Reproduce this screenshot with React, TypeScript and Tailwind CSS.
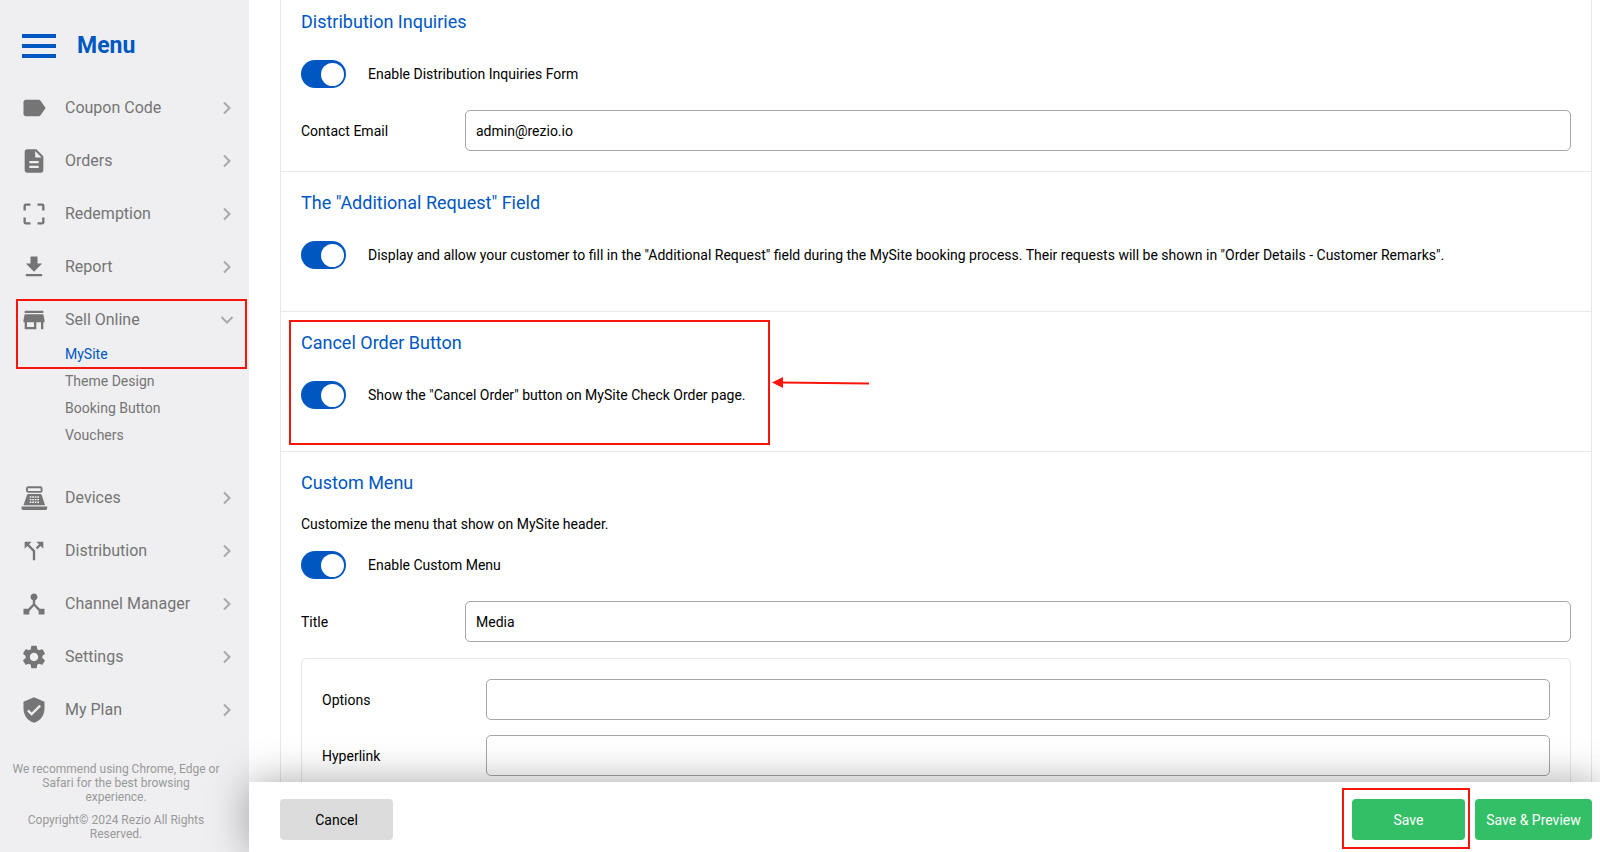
import React, { useState } from 'react';
import type { IconType } from 'react-icons';
import {
  MdCallSplit,
  MdDescription,
  MdDeviceHub,
  MdFileDownload,
  MdLabel,
  MdSettings,
  MdStore,
  MdVerifiedUser,
} from 'react-icons/md';

interface NavItem {
  label: string;
  icon: IconType | typeof ScanIcon;
  children?: string[];
}

function ScanIcon({ className }: { className?: string }) {
  return (
    <svg viewBox="0 0 24 24" fill="none" stroke="currentColor" strokeWidth="2" className={className}>
      <path d="M4 9V5a1 1 0 0 1 1-1h4M15 4h4a1 1 0 0 1 1 1v4M20 15v4a1 1 0 0 1-1 1h-4M9 20H5a1 1 0 0 1-1-1v-4" />
    </svg>
  );
}

function RegisterIcon({ className }: { className?: string }) {
  return (
    <svg viewBox="0 0 24 24" fill="currentColor" className={className}>
      <rect x="6" y="2.8" width="12.5" height="4" rx="1" fill="none" stroke="currentColor" strokeWidth="1.6" />
      <path d="M7.5 8.500h9.500c.8 0 1.300.4 1.600 1l2.900 8.800h-18.500L5.900 9.500c.3-.6.8-1 1.600-1z" />
      <path d="M1.300 19.300h22v1.400c0 .9-.6 1.500-1.500 1.500h-19c-.9 0-1.500-.6-1.500-1.500z" />
      <path
        d="M8.300 11.200h8M8.300 13.400h8M8.300 15.600h8"
        stroke="#efeff1"
        strokeWidth="1.2"
        strokeDasharray="1.5 0.660"
      />
    </svg>
  );
}

function Chevron({ open }: { open?: boolean }) {
  return (
    <svg viewBox="0 0 14 14" fill="none" stroke="#a9a9a9" strokeWidth="2" className="size-[14px] shrink-0">
      <path d={open ? 'M1.5 4l5.5 5.5L12.5 4' : 'M4 1.5L9.5 7L4 12.5'} />
    </svg>
  );
}

const navItems: NavItem[] = [
  { label: 'Coupon Code', icon: MdLabel },
  { label: 'Orders', icon: MdDescription },
  { label: 'Redemption', icon: ScanIcon },
  { label: 'Report', icon: MdFileDownload },
  { label: 'Sell Online', icon: MdStore, children: ['MySite', 'Theme Design', 'Booking Button', 'Vouchers'] },
  { label: 'Devices', icon: RegisterIcon },
  { label: 'Distribution', icon: MdCallSplit },
  { label: 'Channel Manager', icon: MdDeviceHub },
  { label: 'Settings', icon: MdSettings },
  { label: 'My Plan', icon: MdVerifiedUser },
];

function Sidebar() {
  return (
    <aside className="flex w-[249px] shrink-0 flex-col overflow-hidden bg-[#efeff1] text-[#757575]">
      <button type="button" className="mt-[30px] flex h-8 items-center gap-[21px] pl-[22px] text-[#0057c2]">
        <svg viewBox="0 0 34 24" fill="currentColor" className="h-6 w-[34px]">
          <path d="M0 0h34v4H0zM0 10h34v4H0zM0 20h34v4H0z" />
        </svg>
        <span className="text-[23px] leading-8 font-bold">Menu</span>
      </button>

      <nav className="mt-[19px]">
        {navItems.map(({ label, icon: Icon, children }) => (
          <div key={label} className="relative">
            <a href="#" className="flex h-[53px] items-center pr-[15px] pl-5">
              <Icon className="size-7 shrink-0 text-[#757575]" />
              <span className="ml-[17px] flex-1 text-base">{label}</span>
              <Chevron open={!!children} />
            </a>
            {children && (
              <>
                <ul className="-mt-[5px] pb-[22px] pl-[65px] text-sm leading-[27px]">
                  {children.map((child) => (
                    <li key={child}>
                      <a href="#" className={child === 'MySite' ? 'text-[#0057c2]' : ''}>
                        {child}
                      </a>
                    </li>
                  ))}
                </ul>
                <div className="pointer-events-none absolute top-[6px] right-[2px] left-4 h-[70px] border-2 border-[#f8160c]" />
              </>
            )}
          </div>
        ))}
      </nav>

      <footer className="mt-[26px] w-[232px] px-[11px] text-center text-xs leading-[14px] text-[#999]">
        <p>We recommend using Chrome, Edge or Safari for the best browsing experience.</p>
        <p className="mt-[9px]">Copyright© 2024 Rezio All Rights Reserved.</p>
      </footer>
    </aside>
  );
}

function Toggle({ label }: { label: string }) {
  const [checked, setChecked] = useState(true);

  return (
    <label className="flex items-center gap-[22px]">
      <input
        type="checkbox"
        role="switch"
        checked={checked}
        onChange={(e) => setChecked(e.target.checked)}
        className="flex h-7 w-[45px] shrink-0 appearance-none items-center rounded-full bg-gray-400 px-[2px] before:size-[23px] before:rounded-full before:bg-white checked:justify-end checked:bg-[#0057c2]"
      />
      <span>{label}</span>
    </label>
  );
}

interface FieldProps {
  id: string;
  label: string;
  defaultValue?: string;
}

function Field({ id, label, defaultValue }: FieldProps) {
  return (
    <div className="flex items-center">
      <label htmlFor={id} className="w-[164px] shrink-0">
        {label}
      </label>
      <input
        id={id}
        type="text"
        defaultValue={defaultValue}
        className="h-[41px] min-w-0 flex-1 rounded-[5px] border border-[#a6a6a6] bg-transparent px-[10px]"
      />
    </div>
  );
}

function Heading({ children }: { children: React.ReactNode }) {
  return <h2 className="text-lg leading-6 text-[#0057c2]">{children}</h2>;
}

export default function App() {
  return (
    <div className="flex h-screen bg-white font-['Roboto',sans-serif] text-sm leading-5 text-black">
      <Sidebar />

      <div className="flex min-w-0 flex-1 flex-col">
        <main className="min-h-0 flex-1 overflow-hidden pr-2 pl-[31px]">
          <div className="h-full border-x border-[#e8e8e8]">
            <section className="border-b border-[#e8e8e8] px-5 pt-[10px] pb-5">
              <Heading>Distribution Inquiries</Heading>
              <div className="mt-[26px] mb-[22px]">
                <Toggle label="Enable Distribution Inquiries Form" />
              </div>
              <Field id="contact-email" label="Contact Email" defaultValue="admin@rezio.io" />
            </section>

            <section className="border-b border-[#e8e8e8] px-5 pt-[19px] pb-[42px]">
              <Heading>The "Additional Request" Field</Heading>
              <div className="mt-[26px]">
                <Toggle label={'Display and allow your customer to fill in the "Additional Request" field during the MySite booking process. Their requests will be shown in "Order Details - Customer Remarks".'} />
              </div>
            </section>

            <section className="relative border-b border-[#e8e8e8] px-5 pt-[19px] pb-[42px]">
              <Heading>Cancel Order Button</Heading>
              <div className="mt-[26px]">
                <Toggle label={'Show the "Cancel Order" button on MySite Check Order page.'} />
              </div>
              {/* highlight frame and its arrow */}
              <div className="pointer-events-none absolute top-2 left-2 flex items-center">
                <div className="h-[125px] w-[481px] border-2 border-[#f8160c]" />
                <svg viewBox="0 0 98 12" className="ml-[2px] h-3 w-[98px]">
                  <path d="M8 5.5L97 6.5" stroke="#f8160c" strokeWidth="2" />
                  <path d="M0 5.5L11 0V11Z" fill="#f8160c" />
                </svg>
              </div>
            </section>

            <section className="px-5 pt-[19px]">
              <Heading>Custom Menu</Heading>
              <p className="mt-[19px] mb-[17px]">Customize the menu that show on MySite header.</p>
              <Toggle label="Enable Custom Menu" />
              <div className="mt-[22px]">
                <Field id="menu-title" label="Title" defaultValue="Media" />
              </div>
              <div className="mt-4 flex flex-col gap-[15px] rounded-[5px] border border-[#e8e8e8] p-5">
                <Field id="menu-options" label="Options" />
                <Field id="menu-hyperlink" label="Hyperlink" />
              </div>
            </section>
          </div>
        </main>

        <footer className="relative z-10 flex h-[70px] shrink-0 items-start bg-white pt-[17px] pr-2 pl-[31px] shadow-[0_0_40px_rgba(0,0,0,0.35)]">
          <button type="button" className="h-[41px] w-[113px] rounded-[4px] bg-[#dcdcdc]">
            Cancel
          </button>
          <div className="ml-auto flex gap-[10px] text-white">
            <div className="relative">
              <button type="button" className="h-[41px] w-[113px] rounded-[4px] bg-[#32bf66]">
                Save
              </button>
              <div className="pointer-events-none absolute -top-[11px] -right-[5px] -bottom-[9px] -left-[10px] border-2 border-[#f8160c]" />
            </div>
            <button type="button" className="h-[41px] w-[117px] rounded-[4px] bg-[#32bf66]">
              Save &amp; Preview
            </button>
          </div>
        </footer>
      </div>
    </div>
  );
}
